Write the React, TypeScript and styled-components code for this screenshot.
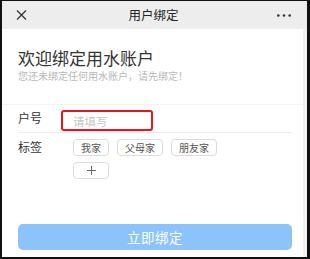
import React from 'react';
import styled, { createGlobalStyle } from 'styled-components';

const GlobalStyle = createGlobalStyle`
  html, body {
    margin: 0;
    padding: 0;
    background: #fff;
  }
  body {
    font-family: "Noto Sans CJK SC", "Noto Sans", sans-serif;
  }
`

const Frame = styled.div`
  box-sizing: border-box;
  width: 310px;
  height: 259px;
  border-style: solid;
  border-color: #111;
  border-width: 1px 3px 2px 2px;
  display: flex;
  flex-direction: column;
  background: #f1f1f1;
`

const NavBar = styled.header`
  height: 28px;
  flex-shrink: 0;
  display: flex;
  align-items: center;
  justify-content: space-between;
  padding: 0 16px 0 14px;
  background: #ededed;
`

const NavTitle = styled.h1`
  margin: 0;
  font-size: 12.5px;
  font-weight: 400;
  color: #222;
  line-height: 16px;
`

const IconSlot = styled.div<{ $end?: boolean }>`
  width: 14px;
  height: 12px;
  display: flex;
  align-items: center;
  justify-content: ${(p) => (p.$end ? 'flex-end' : 'flex-start')};
`

const Body = styled.main`
  flex: 1;
  display: flex;
  flex-direction: column;
  background: #fff;
  margin-right: 4px;
  padding-bottom: 7px;
`

const Intro = styled.section`
  padding: 20px 11px 21px 16px;
  border-bottom: 1px solid #f3f3f3;
`

const Heading = styled.h2`
  margin: 0;
  font-size: 17px;
  font-weight: 400;
  line-height: 18px;
  color: #333;
`

const SubText = styled.p`
  margin: 2px 0 0;
  font-size: 10px;
  line-height: 14px;
  color: #b8b8b8;
`

const Form = styled.div`
  padding: 0 11px 0 16px;
`

const Row = styled.div<{ $line?: boolean }>`
  display: flex;
  align-items: flex-start;
  padding: ${(p) => (p.$line ? '5px 0 1px' : '6px 0 0')};
  border-bottom: ${(p) => (p.$line ? '1px solid #eee' : 'none')};
`

const Label = styled.span`
  width: 43px;
  flex-shrink: 0;
  font-size: 12px;
  line-height: 16px;
  color: #333;
`

const Input = styled.input`
  box-sizing: border-box;
  width: 92px;
  height: 21px;
  border: 2px solid #e8141b;
  border-radius: 3px;
  padding: 0 0 0 10px;
  margin: 0;
  font-family: inherit;
  font-size: 11.5px;
  outline: none;
  color: #333;
  &::placeholder {
    color: #c6c6c6;
  }
`

const TagBox = styled.div`
  display: flex;
  flex-wrap: wrap;
  gap: 6px 8px;
  width: 160px;
  padding-left: 12px;
`

const Tag = styled.span`
  box-sizing: border-box;
  height: 17px;
  padding: 0 7px;
  min-width: 36px;
  border: 1px solid #dcdcdc;
  border-radius: 4px;
  font-size: 10px;
  line-height: 15px;
  color: #555;
  display: inline-flex;
  align-items: center;
  justify-content: center;
`

const Submit = styled.button`
  margin: auto 11px 0 16px;
  height: 26px;
  border: none;
  border-radius: 5px;
  background: #8cc3fa;
  color: #fff;
  font-family: inherit;
  font-size: 13.5px;
  letter-spacing: 0.5px;
`

const tags = ['我家', '父母家', '朋友家']

export default function App() {
  return (
    <>
      <GlobalStyle />
      <Frame>
        <NavBar>
          <IconSlot>
            <svg width="11" height="10" viewBox="0 0 11 10">
              <path d="M1 0.5 L10 9.5 M10 0.5 L1 9.5" stroke="#333" strokeWidth="1.2" fill="none" />
            </svg>
          </IconSlot>
          <NavTitle>用户绑定</NavTitle>
          <IconSlot $end>
            <svg width="14" height="3" viewBox="0 0 14 3">
              <circle cx="1.3" cy="1.5" r="1.3" fill="#333" />
              <circle cx="7" cy="1.5" r="1.3" fill="#333" />
              <circle cx="12.7" cy="1.5" r="1.3" fill="#333" />
            </svg>
          </IconSlot>
        </NavBar>
        <Body>
          <Intro>
            <Heading>欢迎绑定用水账户</Heading>
            <SubText>您还未绑定任何用水账户，请先绑定！</SubText>
          </Intro>
          <Form>
            <Row $line>
              <Label>户号</Label>
              <Input placeholder="请填写" />
            </Row>
            <Row>
              <Label>标签</Label>
              <TagBox>
                {tags.map((t) => (
                  <Tag key={t}>{t}</Tag>
                ))}
                <Tag>
                  <svg width="9" height="9" viewBox="0 0 9 9">
                    <path d="M4.5 0 V9 M0 4.5 H9" stroke="#666" strokeWidth="1" fill="none" />
                  </svg>
                </Tag>
              </TagBox>
            </Row>
          </Form>
          <Submit>立即绑定</Submit>
        </Body>
      </Frame>
    </>
  )
}
